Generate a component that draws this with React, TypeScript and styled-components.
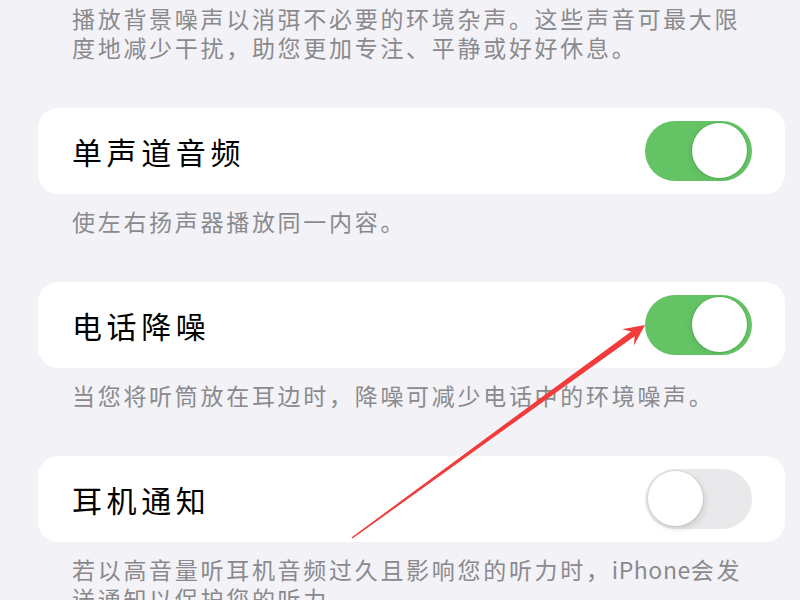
import styled, { createGlobalStyle } from "styled-components";

const GlobalStyle = createGlobalStyle`
    html, body {
        margin: 0;
        padding: 0;
        background-color: #f2f2f7;
    }
    body {
        font-family: "Noto Sans CJK SC", "Noto Sans", sans-serif;
    }
`;

const Page = styled.main`
    position: relative;
    width: 800px;
    height: 600px;
    overflow: hidden;
    background-color: #f2f2f7;
    padding: 3.5px 0 0;
    box-sizing: border-box;
`;

const Footer = styled.p<{ $first?: boolean }>`
    margin: 0;
    padding: ${(p) => (p.$first ? "0" : "12.5px")} 46px 46px 72px;
    font-size: 23px;
    line-height: 29px;
    letter-spacing: 2.7px;
    color: #8a8a8e;
`;

const Latin = styled.span`
    letter-spacing: 0.6px;
`;

const Card = styled.section`
    margin: 0 15px 0 38px;
    height: 86.5px;
    padding: 0 33px 0 34px;
    background-color: #fff;
    border-radius: 20px;
    display: flex;
    align-items: center;
    justify-content: space-between;
`;

const Title = styled.span`
    font-size: 30px;
    letter-spacing: 4.6px;
    color: #000;
`;

const Switch = styled.div<{ $on: boolean }>`
    position: relative;
    width: 107px;
    height: 60px;
    border-radius: 30px;
    background-color: ${(p) => (p.$on ? "#64c465" : "#e9e9eb")};
    flex-shrink: 0;
    &::after {
        content: "";
        position: absolute;
        top: 2.5px;
        left: ${(p) => (p.$on ? "47px" : "2.5px")};
        width: 55px;
        height: 55px;
        border-radius: 50%;
        background-color: #fff;
        box-shadow: ${(p) =>
            p.$on
                ? "0 0 0 1px rgba(60, 140, 60, 0.25), -2px 2px 6px rgba(0, 0, 0, 0.08)"
                : "0 0 0 1px rgba(0, 0, 0, 0.06), 2px 3px 6px rgba(0, 0, 0, 0.12)"};
    }
`;

const Annotation = styled.svg`
    position: absolute;
    left: 0;
    top: 0;
    pointer-events: none;
`;

const rows = [
    { title: "单声道音频", on: true, note: <>使左右扬声器播放同一内容。</> },
    { title: "电话降噪", on: true, note: <>当您将听筒放在耳边时，降噪可减少电话中的环境噪声。</> },
    {
        title: "耳机通知",
        on: false,
        note: <>若以高音量听耳机音频过久且影响您的听力时，<Latin>iPhone</Latin>会发送通知以保护您的听力。</>,
    },
];

const App = () => {
    return (
        <>
            <GlobalStyle />
            <Page>
                <Footer $first>
                    播放背景噪声以消弭不必要的环境杂声。这些声音可最大限度地减少干扰，助您更加专注、平静或好好休息。
                </Footer>
                {rows.map((row) => (
                    <div key={row.title}>
                        <Card>
                            <Title>{row.title}</Title>
                            <Switch $on={row.on} />
                        </Card>
                        <Footer>{row.note}</Footer>
                    </div>
                ))}
                {/* red arrow drawn on top of the screenshot */}
                <Annotation width="800" height="600" viewBox="0 0 800 600">
                    <polygon
                        points="645,325 622.1,329.3 631.1,331.4 351.5,537.4 352.5,538.6 634.6,336.2 633.9,345.4"
                        fill="#f23b3b"
                    />
                </Annotation>
            </Page>
        </>
    );
};

export default App;
